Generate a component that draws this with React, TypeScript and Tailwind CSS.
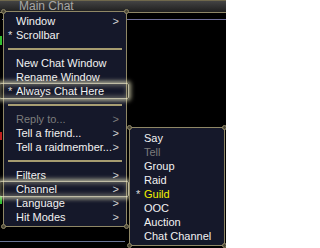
import React from "react";

type Item =
  | { kind: "sep" }
  | { kind: "item"; label: string; star?: boolean; arrow?: boolean; disabled?: boolean; glow?: boolean; color?: string };

const mainItems: Item[] = [
  { kind: "item", label: "Window", arrow: true },
  { kind: "item", label: "Scrollbar", star: true },
  { kind: "sep" },
  { kind: "item", label: "New Chat Window" },
  { kind: "item", label: "Rename Window" },
  { kind: "item", label: "Always Chat Here", star: true, glow: true },
  { kind: "sep" },
  { kind: "item", label: "Reply to...", arrow: true, disabled: true },
  { kind: "item", label: "Tell a friend...", arrow: true },
  { kind: "item", label: "Tell a raidmember...", arrow: true },
  { kind: "sep" },
  { kind: "item", label: "Filters", arrow: true },
  { kind: "item", label: "Channel", arrow: true, glow: true },
  { kind: "item", label: "Language", arrow: true },
  { kind: "item", label: "Hit Modes", arrow: true },
];

const subItems: Item[] = [
  { kind: "item", label: "Say" },
  { kind: "item", label: "Tell", disabled: true },
  { kind: "item", label: "Group" },
  { kind: "item", label: "Raid" },
  { kind: "item", label: "Guild", star: true, color: "yellow" },
  { kind: "item", label: "OOC" },
  { kind: "item", label: "Auction" },
  { kind: "item", label: "Chat Channel" },
];

function Knobs() {
  const k = "absolute w-[5px] h-[5px] rounded-full bg-[#4b4737] border border-[#8f8766]";
  return (
    <>
      <span className={`${k} -left-[3px] -top-[3px]`} />
      <span className={`${k} -right-[3px] -top-[3px]`} />
      <span className={`${k} -left-[3px] -bottom-[3px]`} />
      <span className={`${k} -right-[3px] -bottom-[3px]`} />
    </>
  );
}

function Row({ it, sub }: { it: Item; sub?: boolean }) {
  if (it.kind === "sep") {
    return (
      <div className="h-[14px] flex items-center px-[4px]">
        <div className="h-[2px] w-full bg-[#a69c70]" />
      </div>
    );
  }
  const textColor = it.disabled
    ? "text-[#7c7c7c]"
    : it.color === "yellow"
    ? "text-[#f2f200]"
    : "text-[#f2f2f2]";
  return (
    <div className={`relative flex h-[14px] items-center text-[11px] leading-[14px] ${sub ? "pl-[6px]" : "pl-[4px]"} pr-[7px]`}>
      {it.glow && (
        <div className="pointer-events-none absolute -left-[5px] -right-[3px] -top-[1px] -bottom-[1px] rounded-[2px] border border-[#ebe7c6]/80 shadow-[0_0_4px_2px_rgba(230,226,190,0.7),inset_0_0_4px_2px_rgba(230,226,190,0.35)]" />
      )}
      <span className="w-[8px] text-[#dcdcdc]">{it.star ? "*" : ""}</span>
      <span className={`flex-1 whitespace-nowrap ${textColor}`}>{it.label}</span>
      {it.arrow && <span className={it.disabled ? "text-[#7c7c7c]" : "text-[#d4d4d4]"}>&gt;</span>}
    </div>
  );
}

export default function App() {
  return (
    <div className="relative w-[226px] h-[248px] overflow-hidden bg-black font-['Liberation_Sans',Arial,sans-serif]">
      {/* background chat window */}
      <div className="h-[12px] border-t border-[#6f684c] bg-gradient-to-b from-[#444444] to-[#1f1f1f] pl-[19px] text-[12px] leading-[11px] text-[#a6a6a6] overflow-hidden">
        Main Chat
      </div>
      <div className="h-[1px] bg-[#8f8766]" />
      <div className="flex h-[228px]">
        <div className="flex w-[2px] flex-col">
          <div className="h-[23px]" />
          <div className="h-[9px] bg-[#2fbf2f]" />
          <div className="h-[87px]" />
          <div className="h-[8px] bg-[#c02020]" />
          <div className="h-[56px]" />
          <div className="h-[8px] bg-[#2fbf2f]" />
        </div>
        <div className="flex-1 pt-[6px]">
          <div className="h-[1px] bg-[#6f6f9a]" />
        </div>
      </div>
      <div className="h-[1px] w-[125px] bg-[#6a7496]" />

      {/* main menu */}
      <div className="absolute left-[3px] top-[11px] w-[124px] h-[216px] border border-[#8f8766] bg-[#15182a] pt-[2px]">
        <Knobs />
        {mainItems.map((it, i) => (
          <Row key={i} it={it} />
        ))}
      </div>

      {/* sub menu */}
      <div className="absolute left-[129px] top-[127px] w-[96px] h-[119px] border border-[#8f8766] bg-[#15182a] pt-[3px]">
        <Knobs />
        {subItems.map((it, i) => (
          <Row key={i} it={it} sub />
        ))}
      </div>
    </div>
  );
}
